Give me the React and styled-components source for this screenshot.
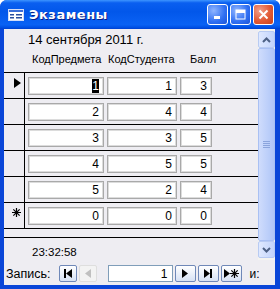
import React from "react";
import styled, { createGlobalStyle } from "styled-components";

const GlobalStyle = createGlobalStyle`
  html, body {
    margin: 0;
    padding: 0;
    background: #ffffff;
  }
`;

const Window = styled.div`
  width: 280px;
  height: 289px;
  display: flex;
  flex-direction: column;
  background: #0a46d8;
  border-radius: 7px 7px 0 0;
  overflow: hidden;
  font-family: "Liberation Sans", Arial, sans-serif;
  font-size: 11px;
  color: #000;
`;

const TitleBar = styled.div`
  height: 29px;
  flex: none;
  display: flex;
  align-items: center;
  padding: 0 6px 0 8px;
  gap: 5px;
  background: linear-gradient(
    to bottom,
    #3d95ff 0%,
    #0a5ff0 10%,
    #0257ea 40%,
    #0a62f4 85%,
    #0052e6 94%,
    #0040d0 100%
  );
`;

const Title = styled.div`
  flex: 1;
  color: #fff;
  font-family: "DejaVu Sans", sans-serif;
  font-weight: bold;
  font-size: 13px;
  letter-spacing: 0.5px;
  text-shadow: 1px 1px 0 #0a1f86;
`;

const Controls = styled.div`
  display: flex;
  gap: 2px;
`;

const CaptionButton = styled.div`
  width: 21px;
  height: 21px;
  box-sizing: border-box;
  border: 1px solid #fff;
  border-radius: 3px;
  display: flex;
  align-items: center;
  justify-content: center;
  background: ${(p) =>
    p.$close
      ? "radial-gradient(circle at 30% 30%, #f2a08a, #e25a35 55%, #c8421c)"
      : "radial-gradient(circle at 30% 30%, #8fb5ff, #2f6ff2 60%, #1d55d8)"};
`;

const Body = styled.div`
  flex: 1;
  display: flex;
  padding: 0 5px 4px 4px;
  min-height: 0;
`;

const Client = styled.div`
  flex: 1;
  display: flex;
  flex-direction: column;
  background: #eeedf2;
`;

const FormArea = styled.div`
  height: 231px;
  display: flex;
`;

const FormContent = styled.div`
  flex: 1;
  display: flex;
  flex-direction: column;
`;

const Header = styled.div`
  height: 44px;
  box-sizing: border-box;
  padding: 3px 0 0 24px;
  display: flex;
  flex-direction: column;
  gap: 6px;
  border-bottom: 1px solid #000;
`;

const DateText = styled.div`
  font-size: 13px;
  line-height: 15px;
`;

const Labels = styled.div`
  display: grid;
  grid-template-columns: 76px 82px 40px;
  padding-left: 4px;
`;

const Detail = styled.div`
  height: 164px;
  display: flex;
  flex-direction: column;
  border-bottom: 1px solid #000;
`;

const Row = styled.div`
  height: 26px;
  box-sizing: border-box;
  display: flex;
  border-bottom: 1px solid #000;
`;

const Selector = styled.div`
  width: 21px;
  border-right: 1px solid #000;
  display: flex;
  justify-content: flex-end;
  padding: 5px 3px 0 0;
  box-sizing: border-box;
  line-height: 0;
`;

const Fields = styled.div`
  display: flex;
  gap: 3px;
  padding: 4px 0 0 3px;
`;

const Field = styled.div`
  width: ${(p) => p.$w}px;
  height: 18px;
  box-sizing: border-box;
  background: #fff;
  border: 1px solid #a9a9a9;
  box-shadow: inset 0 0 0 1px #dcdcdc;
  text-align: right;
  padding: 2px 4px 0 0;
  font-size: 12px;
  line-height: 13px;
`;

const Selected = styled.span`
  background: #000;
  color: #fff;
`;

const Footer = styled.div`
  flex: 1;
  padding: 8px 0 0 28px;
  font-size: 11.5px;
`;

const ScrollBar = styled.div`
  width: 17px;
  display: flex;
  flex-direction: column;
  background: #f4f4f0;
  padding: 2px 0;
  box-sizing: border-box;
`;

const ScrollBtn = styled.div`
  height: 17px;
  flex: none;
  box-sizing: border-box;
  border: 1px solid #b8cbf3;
  border-radius: 2px;
  background: linear-gradient(to right, #dfe9ff, #c2d4fb);
  display: flex;
  align-items: center;
  justify-content: center;
`;

const Thumb = styled.div`
  flex: 1;
  box-sizing: border-box;
  border: 1px solid #a9c0f3;
  border-radius: 2px;
  background: linear-gradient(to right, #cfdcfc, #bccffa 60%, #b0c6f6);
  display: flex;
  align-items: center;
  justify-content: center;
`;

const NavBar = styled.div`
  flex: 1;
  display: flex;
  align-items: center;
  padding: 2px 0 0 2px;
  gap: 2px;
`;

const NavLabel = styled.span`
  font-size: 12.5px;
  margin-right: 6px;
`;

const NavButton = styled.div`
  width: ${(p) => p.$w || 21}px;
  height: 17px;
  box-sizing: border-box;
  border: 1px solid ${(p) => (p.$off ? "#dedede" : "#6f88b8")};
  border-radius: 2px;
  background: ${(p) =>
    p.$off ? "#f3f3f3" : "linear-gradient(to bottom, #ffffff, #d6e1f4)"};
  display: flex;
  align-items: center;
  justify-content: center;
`;

const NavInput = styled.div`
  width: 65px;
  height: 17px;
  box-sizing: border-box;
  background: #fff;
  border: 1px solid #7f9db9;
  text-align: right;
  padding: 1px 4px 0 0;
  margin-left: 9px;
  font-size: 12px;
`;

const NavOf = styled.span`
  margin-left: 6px;
  font-size: 12px;
`;

const rows = [
  [1, 1, 3],
  [2, 4, 4],
  [3, 3, 5],
  [4, 5, 5],
  [5, 2, 4],
];

function FormIcon() {
  return (
    <svg width="16" height="12" viewBox="0 0 16 12">
      <rect x="0.5" y="0.5" width="15" height="11" fill="#fff" stroke="#d0dcf8" />
      <rect x="1" y="1" width="14" height="2" fill="#3c6fd8" />
      <rect x="2" y="5" width="4" height="1.5" fill="#2a4f9e" />
      <rect x="8" y="5" width="6" height="1.5" fill="#2a4f9e" />
      <rect x="2" y="8" width="4" height="1.5" fill="#2a4f9e" />
      <rect x="8" y="8" width="6" height="1.5" fill="#2a4f9e" />
    </svg>
  );
}

function Triangle({ dir = "right", color = "#000", size = 9 }) {
  const w = Math.round(size * 0.7);
  const pts =
    dir === "right"
      ? `0,0 ${w},${size / 2} 0,${size}`
      : `${w},0 0,${size / 2} ${w},${size}`;
  return (
    <svg width={w} height={size} viewBox={`0 0 ${w} ${size}`}>
      <polygon points={pts} fill={color} />
    </svg>
  );
}

function Bar() {
  return (
    <svg width="2" height="9" viewBox="0 0 2 9">
      <rect width="2" height="9" fill="#000" />
    </svg>
  );
}

function Star({ size = 9 }) {
  const m = size / 2;
  const d = size * 0.15;
  return (
    <svg width={size} height={size} viewBox={`0 0 ${size} ${size}`} stroke="#000" strokeWidth="1.2">
      <line x1={m} y1="0" x2={m} y2={size} />
      <line x1="0" y1={m} x2={size} y2={m} />
      <line x1={d} y1={d} x2={size - d} y2={size - d} />
      <line x1={size - d} y1={d} x2={d} y2={size - d} />
    </svg>
  );
}

function Chevron({ up }) {
  return (
    <svg width="9" height="6" viewBox="0 0 9 6">
      <polyline
        points={up ? "1,5 4.5,1.5 8,5" : "1,1 4.5,4.5 8,1"}
        fill="none"
        stroke="#4d6185"
        strokeWidth="2"
      />
    </svg>
  );
}

function Grip() {
  return (
    <svg width="7" height="8" viewBox="0 0 7 8">
      {[0, 2, 4, 6].map((y) => (
        <line key={y} x1="0" y1={y + 0.5} x2="7" y2={y + 0.5} stroke="#8ba4dc" />
      ))}
    </svg>
  );
}

function Record({ values, marker, current }) {
  return (
    <Row>
      <Selector>{marker}</Selector>
      <Fields>
        <Field $w={76}>
          {current ? <Selected>{values[0]}</Selected> : values[0]}
        </Field>
        <Field $w={70}>{values[1]}</Field>
        <Field $w={32}>{values[2]}</Field>
      </Fields>
    </Row>
  );
}

export default function App() {
  return (
    <>
      <GlobalStyle />
      <Window>
        <TitleBar>
          <FormIcon />
          <Title>Экзамены</Title>
          <Controls>
            <CaptionButton>
              <svg width="11" height="11" viewBox="0 0 11 11">
                <rect x="2" y="7" width="6" height="3" fill="#fff" />
              </svg>
            </CaptionButton>
            <CaptionButton>
              <svg width="11" height="11" viewBox="0 0 11 11">
                <rect x="1" y="1" width="9" height="9" fill="none" stroke="#fff" strokeWidth="1" />
                <rect x="1" y="1" width="9" height="3" fill="#fff" />
              </svg>
            </CaptionButton>
            <CaptionButton $close>
              <svg width="11" height="11" viewBox="0 0 11 11">
                <path d="M1.5 1.5 L9.5 9.5 M9.5 1.5 L1.5 9.5" stroke="#fff" strokeWidth="2" />
              </svg>
            </CaptionButton>
          </Controls>
        </TitleBar>
        <Body>
          <Client>
            <FormArea>
              <FormContent>
                <Header>
                  <DateText>14 сентября 2011 г.</DateText>
                  <Labels>
                    <span>КодПредмета</span>
                    <span>КодСтудента</span>
                    <span>Балл</span>
                  </Labels>
                </Header>
                <Detail>
                  {rows.map((r, i) => (
                    <Record
                      key={i}
                      values={r}
                      current={i === 0}
                      marker={i === 0 ? <Triangle size={10} /> : null}
                    />
                  ))}
                  <Record values={[0, 0, 0]} marker={<Star size={9} />} />
                </Detail>
                <Footer>23:32:58</Footer>
              </FormContent>
              <ScrollBar>
                <ScrollBtn>
                  <Chevron up />
                </ScrollBtn>
                <Thumb>
                  <Grip />
                </Thumb>
                <ScrollBtn>
                  <Chevron />
                </ScrollBtn>
              </ScrollBar>
            </FormArea>
            <NavBar>
              <NavLabel>Запись:</NavLabel>
              <NavButton $w={18}>
                <Bar />
                <Triangle dir="left" />
              </NavButton>
              <NavButton $w={18} $off>
                <Triangle dir="left" color="#c0c0c0" />
              </NavButton>
              <NavInput>1</NavInput>
              <NavButton>
                <Triangle />
              </NavButton>
              <NavButton>
                <Triangle />
                <Bar />
              </NavButton>
              <NavButton>
                <Triangle />
                <Star />
              </NavButton>
              <NavOf>и:</NavOf>
            </NavBar>
          </Client>
        </Body>
      </Window>
    </>
  );
}
